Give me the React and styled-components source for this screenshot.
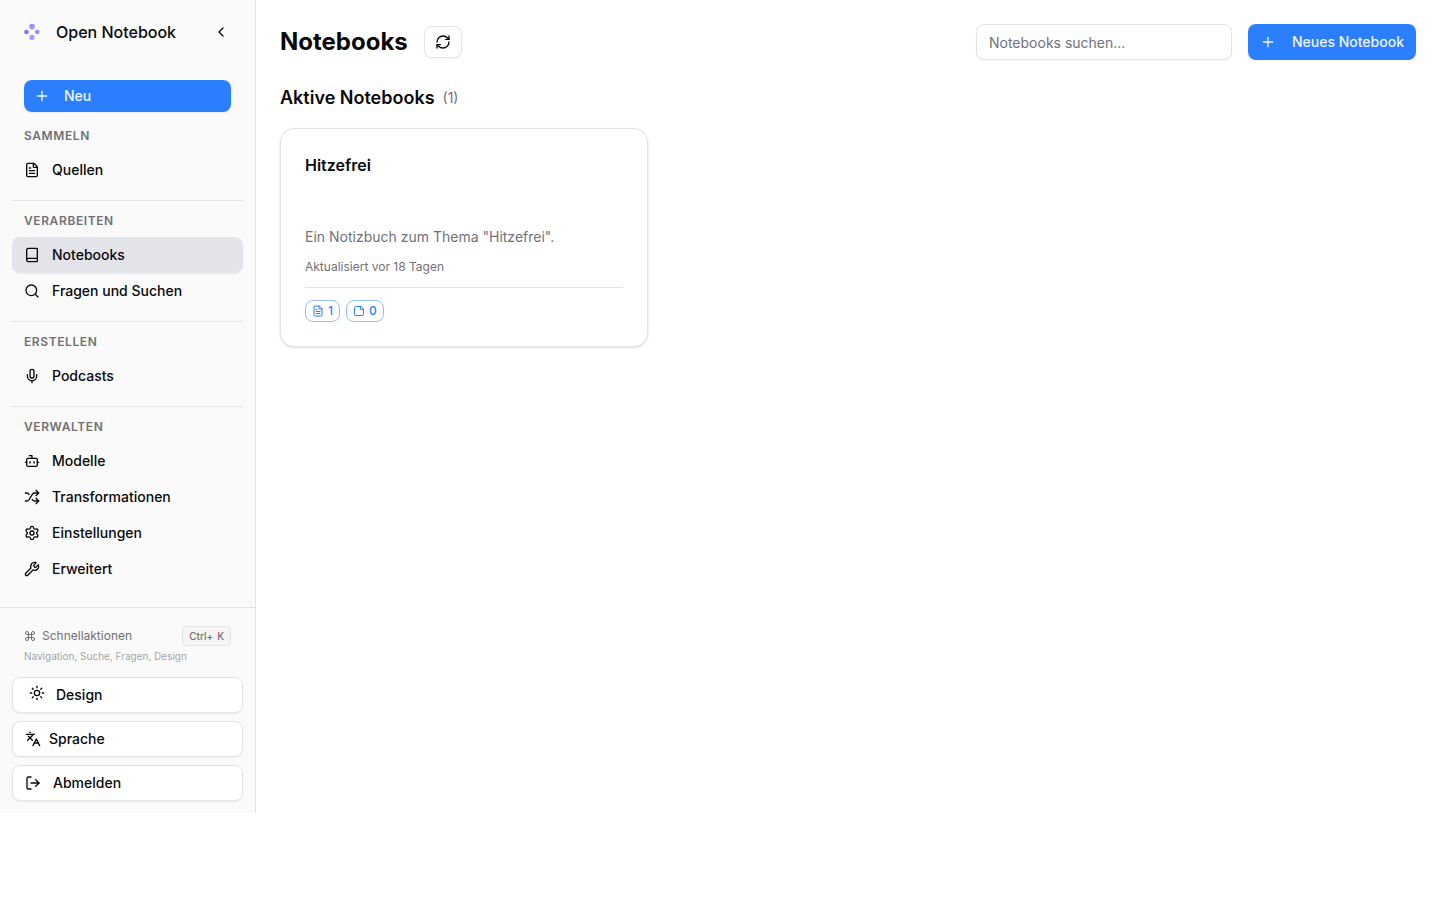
import React from "react";
import styled, { createGlobalStyle, css } from "styled-components";
import {
  Bot,
  Book,
  ChevronLeft,
  Command,
  FileText,
  Languages,
  LogOut,
  Mic,
  Plus,
  RefreshCw,
  Search,
  Settings,
  Shuffle,
  StickyNote,
  Sun,
  Wrench,
} from "lucide-react";

const color = {
  text: "#09090b",
  muted: "#71717b",
  border: "#e4e4e7",
  primary: "#2b7fff",
  primaryText: "#eff6ff",
  sidebar: "#fafafa",
  selected: "#e3e4ea",
};

const GlobalStyle = createGlobalStyle`
  *, *::before, *::after { box-sizing: border-box; }
  body {
    margin: 0;
    background: #fff;
    color: ${color.text};
    font-family: Inter, "Liberation Sans", sans-serif;
    font-size: 14px;
    line-height: 20px;
  }
  h1, h2, h3, p, ul { margin: 0; padding: 0; }
  ul { list-style: none; }
  a { color: inherit; text-decoration: none; }
  button, input { font: inherit; color: inherit; }
  button { cursor: pointer; }
  svg { flex-shrink: 0; display: block; }
`;

const smallShadow = css`
  box-shadow: 0 1px 2px rgba(0, 0, 0, 0.05);
`;

const Page = styled.div`
  display: flex;
  align-items: flex-start;
`;

const Sidebar = styled.aside`
  flex: 0 0 256px;
  background: ${color.sidebar};
  border-right: 1px solid ${color.border};
`;

const SidebarHeader = styled.header`
  display: flex;
  align-items: center;
  justify-content: space-between;
  height: 64px;
  padding: 0 16px;
`;

const Brand = styled.a`
  display: flex;
  align-items: center;
  gap: 8px;
  font-size: 16px;
  line-height: 24px;
  font-weight: 500;
`;

const CollapseButton = styled.button`
  display: flex;
  align-items: center;
  justify-content: center;
  width: 36px;
  height: 32px;
  padding: 0;
  border: 0;
  border-radius: 8px;
  background: transparent;
`;

const Nav = styled.nav`
  padding: 16px 12px 20px;
`;

const PrimaryButton = styled.button`
  display: flex;
  align-items: center;
  gap: 14px;
  height: ${(p) => (p.$compact ? "32px" : "36px")};
  padding: 0 ${(p) => (p.$compact ? "10px" : "12px")};
  border: 0;
  border-radius: 8px;
  background: ${color.primary};
  color: ${color.primaryText};
  font-weight: 500;
  white-space: nowrap;
  ${smallShadow}
  ${(p) => !p.$compact && "gap: 16px;"}
`;

const CreateArea = styled.div`
  display: grid;
  padding: 0 12px;
  margin-bottom: 16px;
`;

const NavSection = styled.section`
  & + & {
    margin-top: 12px;
    padding-top: 12px;
    border-top: 1px solid ${color.border};
  }
`;

const SectionTitle = styled.h3`
  margin-bottom: 8px;
  padding: 0 12px;
  font-size: 12px;
  line-height: 16px;
  font-weight: 600;
  letter-spacing: 0.05em;
  text-transform: uppercase;
  color: #717175;
`;

const NavLink = styled.a`
  display: flex;
  align-items: center;
  gap: 12px;
  height: 36px;
  padding: 0 12px;
  border-radius: 8px;
  font-weight: 500;
  ${(p) =>
    p.$active &&
    css`
      background: ${color.selected};
      ${smallShadow}
    `}
`;

const SidebarFooter = styled.footer`
  display: flex;
  flex-direction: column;
  gap: 8px;
  padding: 12px;
  border-top: 1px solid ${color.border};
`;

const Shortcut = styled.div`
  padding: 6px 12px;
  color: #717175;
`;

const ShortcutRow = styled.div`
  display: flex;
  align-items: center;
  justify-content: space-between;
  height: 20px;
`;

const ShortcutLabel = styled.span`
  display: flex;
  align-items: center;
  gap: 6px;
  font-size: 12px;
  line-height: 16px;
`;

const Keys = styled.kbd`
  display: flex;
  align-items: center;
  gap: 4px;
  height: 20px;
  padding: 0 6px;
  border: 1px solid ${color.border};
  border-radius: 4px;
  background: #f4f4f5;
  font-family: inherit;
  font-size: 10px;
  font-weight: 500;
  line-height: 16px;
`;

const ShortcutHint = styled.p`
  margin-top: 2px;
  font-size: 10px;
  line-height: 16px;
  height: 15px;
  color: #a5a5a8;
`;

const OutlineButton = styled.button`
  display: flex;
  align-items: center;
  gap: ${(p) => p.$gap || 8}px;
  height: ${(p) => (p.$compact ? "32px" : "36px")};
  padding: 0 ${(p) => (p.$compact ? "10px" : "12px")};
  border: 1px solid ${color.border};
  border-radius: 8px;
  background: #fff;
  font-weight: 500;
  ${smallShadow}
`;

const ThemeIcon = styled.span`
  padding: 0 3px 4px 4px;
`;

const Main = styled.main`
  flex: 1;
  min-width: 0;
  padding: 24px;
`;

const Toolbar = styled.div`
  display: flex;
  align-items: center;
  justify-content: space-between;
  gap: 16px;
  margin-bottom: 24px;
`;

const ToolbarGroup = styled.div`
  display: flex;
  align-items: center;
  gap: 16px;
`;

const PageTitle = styled.h1`
  font-size: 24px;
  line-height: 32px;
  font-weight: 700;
`;

const SearchInput = styled.input`
  width: 256px;
  height: 36px;
  padding: 4px 12px;
  border: 1px solid ${color.border};
  border-radius: 8px;
  background: #fff;
  outline: none;
  ${smallShadow}
  &::placeholder {
    color: ${color.muted};
    opacity: 1;
  }
`;

const ListHeading = styled.div`
  display: flex;
  align-items: center;
  gap: 8px;
  margin-bottom: 16px;
`;

const ListTitle = styled.h2`
  font-size: 18px;
  line-height: 28px;
  font-weight: 600;
`;

const Count = styled.span`
  color: ${color.muted};
`;

const CardGrid = styled.div`
  display: grid;
  grid-template-columns: repeat(3, minmax(0, 1fr));
  gap: 16px;
`;

const Card = styled.article`
  padding: 24px;
  border: 1px solid ${color.border};
  border-radius: 14px;
  background: #fff;
  box-shadow: 0 1px 3px rgba(0, 0, 0, 0.1), 0 1px 2px -1px rgba(0, 0, 0, 0.1);
`;

const CardHeader = styled.div`
  min-height: 50px;
  margin-bottom: 24px;
`;

const CardTitle = styled.h3`
  font-size: 16px;
  line-height: 24px;
  font-weight: 600;
`;

const Description = styled.p`
  color: ${color.muted};
`;

const Updated = styled.p`
  margin-top: 12px;
  font-size: 12px;
  line-height: 16px;
  color: ${color.muted};
`;

const BadgeRow = styled.div`
  display: flex;
  gap: 6px;
  margin-top: 12px;
  padding-top: 12px;
  border-top: 1px solid ${color.border};
`;

const Badge = styled.span`
  display: flex;
  align-items: center;
  gap: 4px;
  height: 22px;
  padding: 0 6px;
  border: 1px solid #95bfff;
  border-radius: 8px;
  color: ${color.primary};
  font-size: 12px;
  line-height: 16px;
  font-weight: 500;
`;

const sections = [
  { title: "Sammeln", items: [{ label: "Quellen", icon: FileText }] },
  {
    title: "Verarbeiten",
    items: [
      { label: "Notebooks", icon: Book, active: true },
      { label: "Fragen und Suchen", icon: Search },
    ],
  },
  { title: "Erstellen", items: [{ label: "Podcasts", icon: Mic }] },
  {
    title: "Verwalten",
    items: [
      { label: "Modelle", icon: Bot },
      { label: "Transformationen", icon: Shuffle },
      { label: "Einstellungen", icon: Settings },
      { label: "Erweitert", icon: Wrench },
    ],
  },
];

function Logo() {
  return (
    <svg width="32" height="32" viewBox="0 0 32 32" aria-hidden="true">
      <defs>
        <linearGradient id="dot" x1="0" y1="0.2" x2="1" y2="0.8">
          <stop offset="0" stopColor="#9a74fb" />
          <stop offset="1" stopColor="#9aa5ff" />
        </linearGradient>
        <linearGradient id="dotTop" x1="0" y1="0" x2="0.4" y2="1">
          <stop offset="0" stopColor="#b57cfb" />
          <stop offset="1" stopColor="#929dff" />
        </linearGradient>
        <linearGradient id="dotLeft" x1="0" y1="0" x2="1" y2="0">
          <stop offset="0" stopColor="#8b5cf6" />
          <stop offset="1" stopColor="#7b8cff" />
        </linearGradient>
        <linearGradient id="dotBottom" x1="0.4" y1="0" x2="0.6" y2="1">
          <stop offset="0" stopColor="#b08cfb" />
          <stop offset="1" stopColor="#91b8ff" />
        </linearGradient>
      </defs>
      <circle cx="16" cy="10.6" r="2.8" fill="url(#dotTop)" />
      <circle cx="10.5" cy="16" r="2.3" fill="url(#dotLeft)" />
      <circle cx="21.4" cy="16" r="2.3" fill="url(#dot)" />
      <circle cx="16" cy="21.4" r="2.6" fill="url(#dotBottom)" />
    </svg>
  );
}

export default function App() {
  return (
    <>
      <GlobalStyle />
      <Page>
        <Sidebar>
          <SidebarHeader>
            <Brand href="#">
              <Logo />
              Open Notebook
            </Brand>
            <CollapseButton type="button" aria-label="Seitenleiste einklappen">
              <ChevronLeft size={16} />
            </CollapseButton>
          </SidebarHeader>

          <Nav>
            <CreateArea>
              <PrimaryButton type="button" $compact>
                <Plus size={16} />
                Neu
              </PrimaryButton>
            </CreateArea>
            {sections.map((section) => (
              <NavSection key={section.title}>
                <SectionTitle>{section.title}</SectionTitle>
                <ul>
                  {section.items.map(({ label, icon: Icon, active }) => (
                    <li key={label}>
                      <NavLink
                        href="#"
                        $active={active}
                        aria-current={active ? "page" : undefined}
                      >
                        <Icon size={16} />
                        {label}
                      </NavLink>
                    </li>
                  ))}
                </ul>
              </NavSection>
            ))}
          </Nav>

          <SidebarFooter>
            <Shortcut>
              <ShortcutRow>
                <ShortcutLabel>
                  <Command size={12} />
                  Schnellaktionen
                </ShortcutLabel>
                <Keys>
                  <span>Ctrl+</span>
                  <span>K</span>
                </Keys>
              </ShortcutRow>
              <ShortcutHint>Navigation, Suche, Fragen, Design</ShortcutHint>
            </Shortcut>
            <OutlineButton type="button">
              <ThemeIcon>
                <Sun size={16} />
              </ThemeIcon>
              Design
            </OutlineButton>
            <OutlineButton type="button">
              <Languages size={16} />
              Sprache
            </OutlineButton>
            <OutlineButton type="button" $gap={12}>
              <LogOut size={16} />
              Abmelden
            </OutlineButton>
          </SidebarFooter>
        </Sidebar>

        <Main>
          <Toolbar>
            <ToolbarGroup>
              <PageTitle>Notebooks</PageTitle>
              <OutlineButton type="button" $compact aria-label="Aktualisieren">
                <RefreshCw size={16} />
              </OutlineButton>
            </ToolbarGroup>
            <ToolbarGroup>
              <SearchInput
                type="search"
                placeholder="Notebooks suchen..."
                aria-label="Notebooks suchen"
              />
              <PrimaryButton type="button">
                <Plus size={16} />
                Neues Notebook
              </PrimaryButton>
            </ToolbarGroup>
          </Toolbar>

          <ListHeading>
            <ListTitle>Aktive Notebooks</ListTitle>
            <Count>(1)</Count>
          </ListHeading>

          <CardGrid>
            <Card>
              <CardHeader>
                <CardTitle>Hitzefrei</CardTitle>
              </CardHeader>
              <Description>Ein Notizbuch zum Thema "Hitzefrei".</Description>
              <Updated>Aktualisiert vor 18 Tagen</Updated>
              <BadgeRow>
                <Badge>
                  <FileText size={12} />1
                </Badge>
                <Badge>
                  <StickyNote size={12} />0
                </Badge>
              </BadgeRow>
            </Card>
          </CardGrid>
        </Main>
      </Page>
    </>
  );
}
